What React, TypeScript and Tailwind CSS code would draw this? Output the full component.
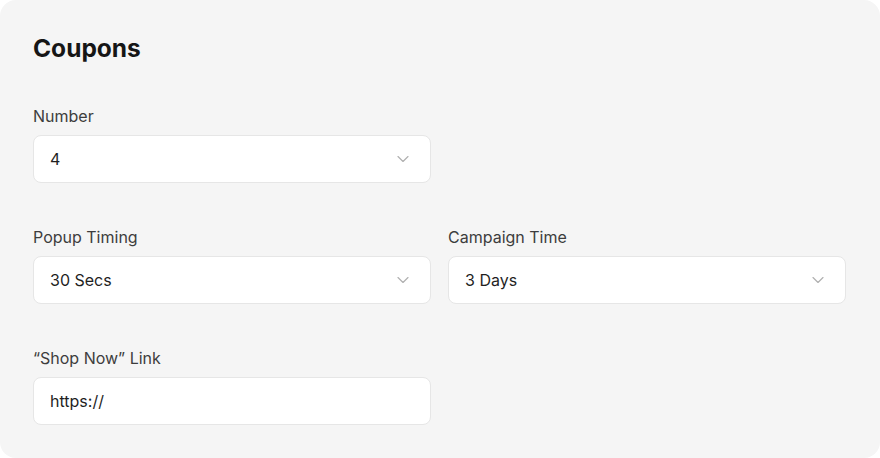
import { ChevronDown } from "lucide-react";

const font = { fontFamily: "Inter, 'Noto Sans', sans-serif" };

function Field({ label, value, select = true }: { label: string; value: string; select?: boolean }) {
  return (
    <div className="flex flex-col gap-[9px]">
      <span className="text-base leading-5 text-[#3d3d3d]">{label}</span>
      <div className="flex h-12 items-center justify-between rounded-lg border border-[#e6e6e6] bg-white pl-4 pr-[17px]">
        <span className="text-base leading-5 text-[#1f1f1f]">{value}</span>
        {select && <ChevronDown className="h-5 w-5 text-[#b0b0b0]" strokeWidth={1.4} />}
      </div>
    </div>
  );
}

export default function App() {
  return (
    <div className="h-[458px] w-[880px] bg-white" style={font}>
      <div className="flex h-[458px] flex-col rounded-2xl bg-[#f5f5f5] pl-[33px] pr-[34px] pt-8">
        <h1 className="text-[24.5px] font-bold leading-8 text-[#161616]">Coupons</h1>

        <div className="mt-[42px] grid grid-cols-2 gap-x-[17px] gap-y-[44px]">
          <Field label="Number" value="4" />
          <div />
          <Field label="Popup Timing" value="30 Secs" />
          <Field label="Campaign Time" value="3 Days" />
          <Field label="“Shop Now” Link" value="https://" select={false} />
        </div>
      </div>
    </div>
  );
}
